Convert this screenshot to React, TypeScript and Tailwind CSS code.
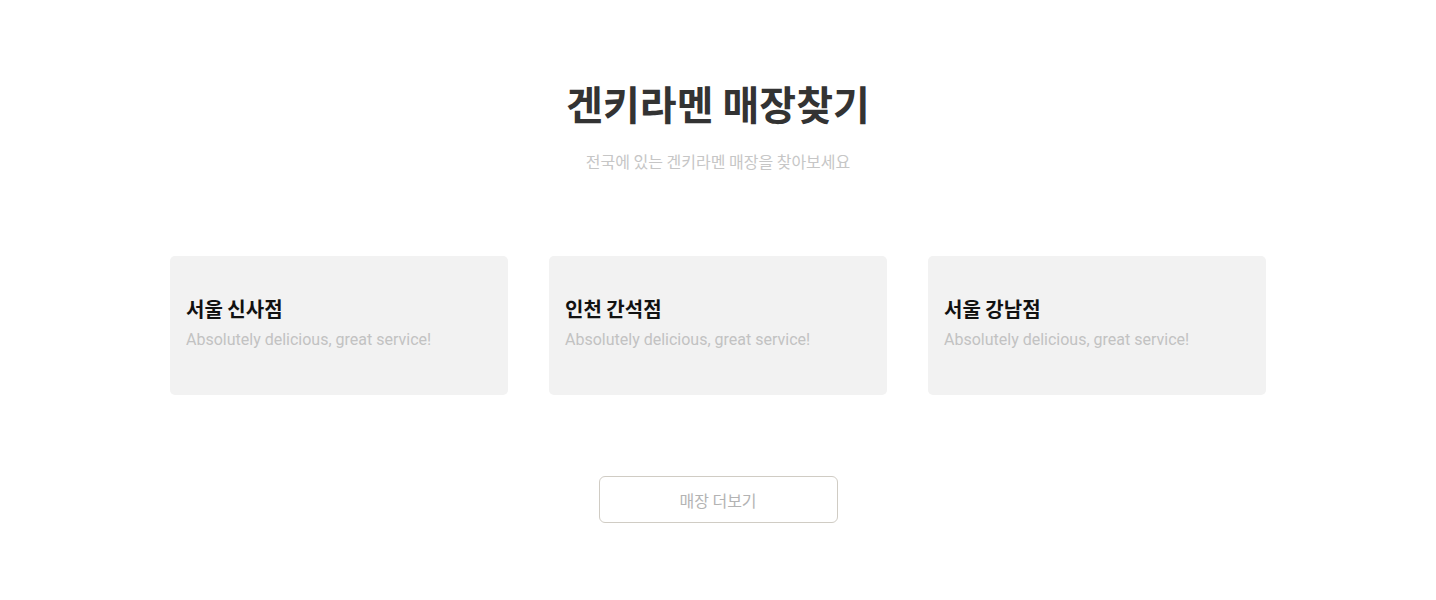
import React from 'react';

const STORES = [
  { name: '서울 신사점', review: 'Absolutely delicious, great service!' },
  { name: '인천 간석점', review: 'Absolutely delicious, great service!' },
  { name: '서울 강남점', review: 'Absolutely delicious, great service!' },
];

const KR = { fontFamily: '"Noto Sans CJK KR", "Noto Sans", sans-serif' };

const App: React.FC = () => {
  return (
    <div className="min-h-[600px] bg-white flex flex-col items-center pt-[76px]" style={KR}>
      <h2 className="text-[40px] leading-[54px] font-bold text-[#333333]">겐키라멘 매장찾기</h2>
      <p className="mt-[19px] text-[16px] leading-[24px] text-[#c6c6c6]">
        전국에 있는 겐키라멘 매장을 찾아보세요
      </p>

      <div className="mt-[83px] grid grid-cols-3 gap-[41px] w-[1096px]">
        {STORES.map((store) => (
          <div key={store.name} className="h-[139px] rounded-[5px] bg-[#f2f2f2] px-4 pb-[5px] flex flex-col justify-center">
            <h3 className="text-[20px] leading-[28px] font-bold text-[#111111]">{store.name}</h3>
            <p
              className="mt-[6px] text-[16px] leading-[22px] text-[#c2c2c2]"
              style={{ fontFamily: 'Roboto, "Noto Sans", sans-serif' }}
            >
              {store.review}
            </p>
          </div>
        ))}
      </div>

      <button className="mt-[81px] w-[239px] h-[47px] rounded-[6px] border border-[#d0ccc4] bg-white text-[16px] text-[#b3b3b3]">
        매장 더보기
      </button>
    </div>
  );
};

export default App;
